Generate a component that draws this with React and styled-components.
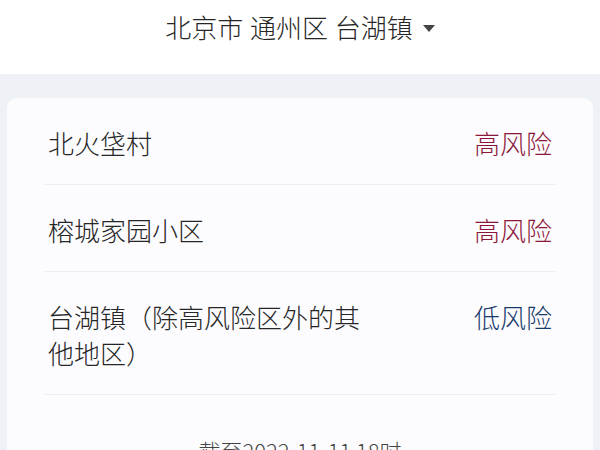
import * as React from 'react'
import styled, { createGlobalStyle } from 'styled-components'

const GlobalStyle = createGlobalStyle`
	html, body {
		margin: 0;
		padding: 0;
		background: #eef1f6;
		font-family: "Noto Sans CJK SC", "Noto Sans", sans-serif;
	}
`

const areas = [
	{ name: '北火垡村', level: 'high' },
	{ name: '榕城家园小区', level: 'high' },
	{ name: '台湖镇（除高风险区外的其他地区）', level: 'low' },
]

const App = () =>
	<>
		<GlobalStyle/>
		<Page>
			<Header>
				<Title>北京市 通州区 台湖镇</Title>
				<Caret/>
			</Header>
			<Card>
				{areas.map((area) =>
					<Row key={area.name}>
						<AreaName>{area.name}</AreaName>
						<Risk $level={area.level}>
							{area.level === 'high' ? '高风险' : '低风险'}
						</Risk>
					</Row>
				)}
				<Footer>截至2022-11-11 18时</Footer>
			</Card>
		</Page>
	</>

export default App;

const Page = styled.div`
	width: 600px;
	height: 450px;
	overflow: hidden;
	background: #eef1f6;
`

const Header = styled.div`
	display: flex;
	align-items: center;
	justify-content: center;
	gap: 10px;
	height: 74px;
	padding-bottom: 20px;
	box-sizing: border-box;
	background: #ffffff;
	margin-bottom: 24px;
`

const Title = styled.div`
	font-size: 26px;
	font-weight: 300;
	line-height: 36px;
	color: #262626;
	word-spacing: 1px;
`

const Caret = styled.span`
	width: 0;
	height: 0;
	border-left: 6px solid transparent;
	border-right: 6px solid transparent;
	border-top: 7px solid #444444;
	margin-top: 2px;
`

const Card = styled.div`
	margin: 0 7px;
	padding: 0 37px;
	background: #fcfcfe;
	border-radius: 10px;
	height: 400px;
`

const Row = styled.div`
	display: flex;
	justify-content: space-between;
	align-items: flex-start;
	padding: 27px 4px 23px;
	border-bottom: 1px solid #ebedf2;
`

const AreaName = styled.div`
	max-width: 318px;
	font-size: 26px;
	font-weight: 300;
	line-height: 36px;
	color: #262626;
`

const Risk = styled.div`
	font-size: 26px;
	font-weight: 300;
	line-height: 36px;
	color: ${(p) => p.$level === 'high' ? '#8a1638' : '#17396b'};
`

const Footer = styled.div`
	margin-top: 40px;
	text-align: center;
	font-size: 22px;
	font-weight: 300;
	line-height: 30px;
	color: #444444;
`
